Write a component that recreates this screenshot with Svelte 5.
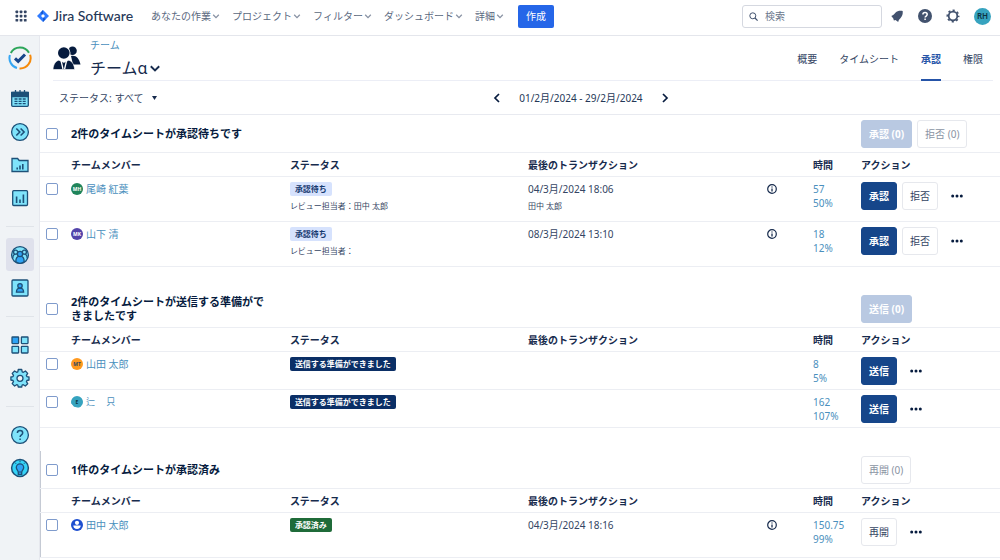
<script>
  const navItems = ["あなたの作業", "プロジェクト", "フィルター", "ダッシュボード", "詳細"];
  const tabs = ["概要", "タイムシート", "承認", "権限"];
  const activeTab = "承認";

  // Seitenleiste, in Gruppen durch Linien getrennt
  const sideGroups = [
    [
      { icon: "calendar", label: "カレンダー" },
      { icon: "forward", label: "次へ" },
      { icon: "folder", label: "フォルダー" },
      { icon: "chart", label: "レポート" }
    ],
    [
      { icon: "teams", label: "チーム", active: true },
      { icon: "account", label: "アカウント" }
    ],
    [
      { icon: "apps", label: "アプリ" },
      { icon: "gear", label: "設定" }
    ],
    [
      { icon: "help", label: "ヘルプ" },
      { icon: "bulb", label: "ヒント" }
    ]
  ];

  const sections = [
    {
      id: "waiting",
      title: "2件のタイムシートが承認待ちです",
      bulk: [
        { text: "承認 (0)", primary: true },
        { text: "拒否 (0)", primary: false }
      ],
      rows: [
        {
          name: "尾崎 紅葉", initials: "MH", color: "green",
          status: "承認待ち", kind: "waiting", reviewer: "レビュー担当者：田中 太郎",
          date: "04/3月/2024 18:06", by: "田中 太郎",
          hours: "57", percent: "50%", actions: ["承認", "拒否"]
        },
        {
          name: "山下 清", initials: "MK", color: "purple",
          status: "承認待ち", kind: "waiting", reviewer: "レビュー担当者：",
          date: "08/3月/2024 13:10",
          hours: "18", percent: "12%", actions: ["承認", "拒否"]
        }
      ],
      tall: true
    },
    {
      id: "ready",
      title: "2件のタイムシートが送信する準備ができましたです",
      bulk: [{ text: "送信 (0)", primary: true }],
      rows: [
        {
          name: "山田 太郎", initials: "MT", color: "orange",
          status: "送信する準備ができました", kind: "ready",
          hours: "8", percent: "5%", actions: ["送信"]
        },
        {
          name: "辷　 只", initials: "E", color: "teal", small: true,
          status: "送信する準備ができました", kind: "ready",
          hours: "162", percent: "107%", actions: ["送信"]
        }
      ]
    },
    {
      id: "approved",
      title: "1件のタイムシートが承認済み",
      bulk: [{ text: "再開 (0)", primary: false }],
      rows: [
        {
          name: "田中 太郎", color: "blue",
          status: "承認済み", kind: "approved",
          date: "04/3月/2024 18:16",
          hours: "150.75", percent: "99%", actions: ["再開"]
        }
      ],
      tall: true
    }
  ];
</script>

{#snippet chevron(size)}
  <svg class="chevron" width={size} height={size} viewBox="0 0 10 10" aria-hidden="true">
    <path d="M1.5 3.5 5 7l3.5-3.5" fill="none" stroke="currentColor" stroke-width="1.6" />
  </svg>
{/snippet}

{#snippet sideIcon(name)}
  <svg width="20" height="20" viewBox="0 0 20 20" fill="#7fe3fb" stroke="#1d5078" stroke-width="1.3" aria-hidden="true">
    {#if name === "calendar"}
      <rect x="1.7" y="3.5" width="16.6" height="13.8" rx="1" />
      <path d="M1.7 3.5h16.6v4H1.7z" fill="#1d5078" />
      <path d="M5.5 1v4M10 1v4M14.5 1v4" />
      <path d="M4.5 10h3M8.6 10h3M12.7 10h3M4.5 12.3h3M8.6 12.3h3M12.7 12.3h3M4.5 14.7h3M8.6 14.7h3M12.7 14.7h3" />
    {:else if name === "forward"}
      <circle cx="10" cy="10" r="8.4" />
      <path d="m6.3 6.5 3.5 3.5-3.5 3.5M10.6 6.5l3.5 3.5-3.5 3.5" fill="none" stroke-width="1.6" />
    {:else if name === "folder"}
      <path d="M2 3.5h5.6l1.6 2H18v11H2z" />
      <path d="M7.2 14.5v-2M10 14.5v-4M12.8 14.5V9" stroke-width="1.6" />
    {:else if name === "chart"}
      <rect x="2.7" y="2.7" width="14.8" height="14.8" rx="1" />
      <path d="M6.6 15V8.5M10 15v-3.5M13.4 15V6.5" stroke-width="1.6" />
    {:else if name === "teams"}
      <circle cx="10" cy="10" r="8.4" />
      <path d="M2.8 13.5c0-3 1-4.4 2.8-4.4M17.2 13.5c0-3-1-4.4-2.8-4.4" fill="none" />
      <circle cx="5.6" cy="7.2" r="2" />
      <circle cx="14.4" cy="7.2" r="2" />
      <path d="M5.8 16.8c0-4 1.6-5.6 4.2-5.6s4.2 1.6 4.2 5.6c-2.6 1.9-5.8 1.9-8.4 0z" fill="#2ea3f5" />
      <circle cx="10" cy="9" r="2.6" fill="#2ea3f5" />
    {:else if name === "account"}
      <rect x="2" y="2" width="16" height="16" rx="1" />
      <path d="M6.4 14.2c0-2.7 1.2-4.1 3.6-4.1s3.6 1.4 3.6 4.1z" fill="#2ea3f5" />
      <circle cx="10" cy="7.8" r="2.2" fill="#2ea3f5" />
    {:else if name === "apps"}
      <rect x="2" y="2" width="6.6" height="6.6" rx="0.5" fill="#2ea3f5" />
      <rect x="11.4" y="2" width="6.6" height="6.6" rx="0.5" />
      <rect x="2" y="11.4" width="6.6" height="6.6" rx="0.5" />
      <rect x="11.4" y="11.4" width="6.6" height="6.6" rx="0.5" />
    {:else if name === "gear"}
      <path stroke-linejoin="round" d="M8.3 1.5h3.4l.5 2.3 1.2.5 2-1.3 2.3 2.4-1.3 2 .5 1.2 2.1.4v3l-2.1.5-.5 1.2 1.3 2-2.4 2.3-2-1.3-1.2.5-.4 1.8H8.3l-.5-1.8-1.2-.5-2 1.3-2.4-2.4 1.3-2-.5-1.1-2.1-.5V9l2.1-.4.5-1.2-1.3-2L4.6 3l2 1.3 1.2-.5z" />
      <circle cx="10" cy="10.3" r="3" fill="#f0f3f6" />
    {:else if name === "help"}
      <circle cx="10" cy="10" r="8.4" />
      <path d="M7.4 8c0-3.4 5.3-3.4 5.3 0 0 1.9-2.6 1.9-2.6 4.1M10.1 13.6v1.5" fill="none" stroke-width="1.5" />
    {:else if name === "bulb"}
      <circle cx="10" cy="10" r="8.4" fill="#35d3f7" stroke-width="1.5" />
      <path d="M8.3 14.5c0-2-2-2.6-2-5a3.7 3.7 0 0 1 7.4 0c0 2.4-2 3-2 5v1.8H8.3z" fill="#2ea3f5" />
      <path d="M10 2.5v1.8M4.8 4.5l1.3 1.3M15.2 4.5l-1.3 1.3M8.5 14h3" stroke-width="1" />
    {/if}
  </svg>
{/snippet}

<div class="app">
  <header class="topbar">
    <button class="icon-button" aria-label="アプリ切り替え">
      <svg width="12" height="12" viewBox="0 0 12 12" fill="#344563">
        {#each [0, 1, 2] as r}
          {#each [0, 1, 2] as c}
            <rect x={0.5 + c * 4.2} y={0.5 + r * 4.2} width="2.7" height="2.7" rx="0.7" />
          {/each}
        {/each}
      </svg>
    </button>
    <a class="brand" href="#home">
      <svg width="12" height="12" viewBox="0 0 12 12" aria-hidden="true">
        <path d="M6 0l6 6-6 6-6-6z" fill="#2f7bff" />
        <path d="M6 0 3.5 2.8 6 5.2z" fill="#1559cf" />
        <path d="M6 12l2.5-2.8L6 6.8z" fill="#1559cf" />
        <path d="M6 4l2 2-2 2-2-2z" fill="#fff" />
      </svg>
      <span>Jira Software</span>
    </a>
    <nav class="main-nav">
      {#each navItems as item}
        <button class="nav-item">{item}{@render chevron(8)}</button>
      {/each}
    </nav>
    <button class="create">作成</button>
    <label class="search">
      <svg width="9" height="9" viewBox="0 0 9 9" aria-hidden="true">
        <circle cx="3.8" cy="3.8" r="3" fill="none" stroke="#42526e" />
        <path d="m6 6 2.6 2.6" stroke="#42526e" stroke-width="1.2" />
      </svg>
      <input type="search" placeholder="検索" aria-label="検索" />
    </label>
    <div class="top-icons">
      <button class="icon-button" aria-label="通知">
        <svg width="14" height="14" viewBox="0 0 14 14" fill="#42526e">
          <path d="M12.7 2c.3 3-.4 5.400-2.500 7.500L8.300 11.600 2.800 6.800 5.400 3.700C7.300 1.900 9.800 1.500 12.700 2z" />
          <path d="M1.300 6.900 4.200 5.400l4.900 4.200-.9 3.500-2.700-2.200-1.600.5-.6-2z" />
        </svg>
      </button>
      <button class="icon-button" aria-label="ヘルプ">
        <svg width="14" height="14" viewBox="0 0 14 14">
          <circle cx="7" cy="7" r="7" fill="#42526e" />
          <path d="M4.900 5.600c0-2.700 4.300-2.700 4.300 0 0 1.400-2.100 1.500-2.100 3M7.100 9.600v1.500" fill="none" stroke="#fff" stroke-width="1.500" />
        </svg>
      </button>
      <button class="icon-button" aria-label="設定">
        <svg width="14" height="14" viewBox="0 0 14 14" fill="none" stroke="#42526e">
          <circle cx="7" cy="7" r="4.300" stroke-width="1.800" />
          <circle cx="7" cy="7" r="5.700" stroke-width="1.600" stroke-dasharray="2.200 2.280" stroke-dashoffset="1.100" />
        </svg>
      </button>
      <button class="profile" aria-label="プロフィール">RH</button>
    </div>
  </header>

  <div class="body">
    <aside class="sidebar">
      <a class="side-logo" href="#start" aria-label="Timesheets">
        <svg width="24" height="24" viewBox="0 0 24 24" fill="none" stroke-width="2">
          <path d="M2.8 7A10.400 10.400 0 0 1 21 6.800" stroke="#2da65a" />
          <path d="M22.100 8.800A10.400 10.400 0 0 1 11.500 22.400" stroke="#f58a0b" />
          <path d="M9 22A10.400 10.400 0 0 1 1.900 9" stroke="#35a6f3" />
          <path d="m7 12.300 3.200 3L17 8.500" stroke="#15458a" stroke-width="3" />
        </svg>
      </a>
      {#each sideGroups as group, i}
        {#if i > 0}<hr />{/if}
        {#each group as item}
          <a class="side-item" class:active={item.active} href={`#${item.icon}`} aria-label={item.label}>
            {@render sideIcon(item.icon)}
          </a>
        {/each}
      {/each}
    </aside>

    <main>
      <div class="page-head">
        <svg class="people" width="28" height="24" viewBox="0 0 28 24" fill="#061b3e" aria-hidden="true">
          <circle cx="19.500" cy="4.800" r="4.300" />
          <path d="M18 10c5-1 8 2 9.500 8.500H20z" />
          <circle cx="10.800" cy="7" r="6.700" fill="#fff" />
          <circle cx="10.800" cy="7" r="5.800" />
          <path d="M0 23.500c.3-5 2.400-8.300 5.800-9.300l5 2.300 5-2.300c3.400 1 5.500 4.300 5.800 9.300z" stroke="#fff" stroke-width="0.600" />
          <path d="m8 14.500 2 8.500M13.600 14.500l-2 8.500" stroke="#fff" stroke-width="1.300" />
        </svg>
        <div class="titles">
          <a href="#teams">チーム</a>
          <h1><button>チームα{@render chevron(12)}</button></h1>
        </div>
        <nav class="tabs">
          {#each tabs as tab}
            <a href={`#${tab}`} class:selected={tab === activeTab}>{tab}</a>
          {/each}
        </nav>
      </div>

      <div class="filters">
        <div class="status-filter">
          <label for="status">ステータス:</label>
          <select id="status">
            <option>すべて</option>
          </select>
          <svg width="5" height="4" viewBox="0 0 5 4" aria-hidden="true"><path d="M0 0h5L2.500 4z" fill="#172b4d" /></svg>
        </div>
        <div class="period">
          <button class="icon-button" aria-label="前の期間">
            <svg width="8" height="10" viewBox="0 0 8 10"><path d="M6 1 2 5l4 4" fill="none" stroke="#061b3e" stroke-width="1.700" /></svg>
          </button>
          <span>01/2月/2024 - 29/2月/2024</span>
          <button class="icon-button" aria-label="次の期間">
            <svg width="8" height="10" viewBox="0 0 8 10"><path d="m2 1 4 4-4 4" fill="none" stroke="#061b3e" stroke-width="1.700" /></svg>
          </button>
        </div>
      </div>

      {#each sections as section}
        <section>
          <div class="section-head">
            <input type="checkbox" id={section.id} />
            <h2><label for={section.id}>{section.title}</label></h2>
            <div class="bulk">
              {#each section.bulk as action}
                <button class="action" class:primary={action.primary} disabled>{action.text}</button>
              {/each}
            </div>
          </div>
          <table>
            <colgroup>
              <col class="col-check" />
              <col class="col-member" />
              <col class="col-status" />
              <col />
              <col class="col-info" />
              <col class="col-hours" />
              <col class="col-actions" />
            </colgroup>
            <thead>
              <tr>
                <th></th>
                <th>チームメンバー</th>
                <th>ステータス</th>
                <th>最後のトランザクション</th>
                <th></th>
                <th>時間</th>
                <th>アクション</th>
              </tr>
            </thead>
            <tbody>
              {#each section.rows as row}
                <tr class:tall={section.tall}>
                  <td class="check"><input type="checkbox" aria-label={row.name} /></td>
                  <td>
                    <a class="member" href="#member">
                      <span class={`avatar ${row.color}`}>
                        {#if row.initials}
                          {row.initials}
                        {:else}
                          <svg width="12" height="12" viewBox="0 0 12 12" fill="#fff" aria-hidden="true">
                            <circle cx="6" cy="3.800" r="2.100" />
                            <path d="M2.300 6.500h7.400c0 2.200-1.500 3.400-3.700 3.400s-3.700-1.200-3.700-3.400z" />
                          </svg>
                        {/if}
                      </span>
                      <span class:small={row.small}>{row.name}</span>
                    </a>
                  </td>
                  <td>
                    <span class={`badge ${row.kind}`}>{row.status}</span>
                    {#if row.reviewer}<p class="sub">{row.reviewer}</p>{/if}
                  </td>
                  <td>
                    {#if row.date}{row.date}{/if}
                    {#if row.by}<p class="sub">{row.by}</p>{/if}
                  </td>
                  <td>
                    {#if row.date}
                      <button class="icon-button info" aria-label="詳細情報">
                        <svg width="10" height="10" viewBox="0 0 10 10" fill="none" stroke="#172b4d">
                          <circle cx="5" cy="5" r="4.300" stroke-width="1.200" />
                          <path d="M5 4.500v3M5 2.400v1.200" stroke-width="1.300" />
                        </svg>
                      </button>
                    {/if}
                  </td>
                  <td class="hours">
                    <a href="#hours">{row.hours}</a>
                    <a href="#hours">{row.percent}</a>
                  </td>
                  <td>
                    <div class="row-actions">
                      {#each row.actions as action, i}
                        <button class="action" class:primary={i === 0 && action !== "再開"}>{action}</button>
                      {/each}
                      <button class="icon-button more" aria-label="その他">
                        <svg width="12" height="4" viewBox="0 0 12 4" fill="#061b3e">
                          <circle cx="1.700" cy="2" r="1.500" />
                          <circle cx="6" cy="2" r="1.500" />
                          <circle cx="10.300" cy="2" r="1.500" />
                        </svg>
                      </button>
                    </div>
                  </td>
                </tr>
              {/each}
            </tbody>
          </table>
        </section>
      {/each}
    </main>
  </div>
</div>

<style>
  :global(body) {
    background: #fff;
  }
  .app {
    display: flex;
    flex-direction: column;
    min-height: 100vh;
    font-family: "Noto Sans", "Noto Sans CJK JP", sans-serif;
    font-size: 10px;
    line-height: 14px;
    color: #344563;
  }
  button, input, select {
    font: inherit;
    color: inherit;
  }
  button {
    padding: 0;
    border: 0;
    background: none;
    cursor: pointer;
  }
  a {
    color: #4a8fbd;
    text-decoration: none;
  }
  svg {
    display: block;
    flex: none;
  }
  .icon-button {
    display: flex;
    align-items: center;
  }

  /* Kopfleiste */
  .topbar {
    display: flex;
    align-items: center;
    box-sizing: border-box;
    height: 36px;
    padding: 0 9px 3px 15px;
    border-bottom: 1px solid #e4e6ec;
  }
  .brand {
    display: flex;
    align-items: center;
    gap: 4px;
    margin-left: 10px;
    font-family: Lato, "Noto Sans", sans-serif;
    font-size: 14px;
    font-weight: 500;
    color: #253858;
    white-space: nowrap;
  }
  .main-nav {
    display: flex;
    gap: 12px;
    margin-left: 18px;
  }
  .nav-item {
    display: flex;
    align-items: center;
    gap: 1px;
    color: #5a6880;
    white-space: nowrap;
  }
  .nav-item :global(.chevron) {
    color: #8993a4;
  }
  .create {
    height: 23px;
    margin-left: 14px;
    padding: 0 8px;
    border-radius: 2px;
    background: #2566e8;
    color: #fff;
    white-space: nowrap;
  }
  .search {
    display: flex;
    align-items: center;
    gap: 7px;
    box-sizing: border-box;
    width: 140px;
    height: 23px;
    margin-left: auto;
    padding: 0 6px;
    border: 1px solid #d5d8e0;
    border-radius: 3px;
  }
  .search input {
    width: 100%;
    min-width: 0;
    padding: 0;
    border: 0;
    outline: 0;
    background: none;
  }
  .search input::placeholder {
    color: #6b778c;
  }
  .top-icons {
    display: flex;
    align-items: center;
    gap: 14px;
    margin-left: 8px;
  }
  .profile {
    width: 17px;
    height: 17px;
    border-radius: 50%;
    background: #36a3bf;
    color: #0b3242;
    font-size: 8px;
    font-weight: 600;
  }

  /* Seitenleiste */
  .body {
    display: flex;
    flex: 1;
  }
  .sidebar {
    box-sizing: border-box;
    flex: none;
    width: 40px;
    padding-top: 10px;
    border-right: 1px solid #e6e8ee;
    background: #f0f3f6;
  }
  .side-logo {
    display: flex;
    justify-content: center;
    margin-bottom: 12px;
  }
  .side-item {
    display: flex;
    align-items: center;
    justify-content: center;
    height: 33px;
    margin: 0 5px 0 6px;
    border-radius: 3px;
  }
  .side-item.active {
    background: #dfe1ec;
  }
  .sidebar hr {
    height: 1px;
    margin: 12px 5px 11px 6px;
    border: 0;
    background: #e0e4e9;
  }

  main {
    flex: 1;
    min-width: 0;
  }
  .page-head {
    display: flex;
    align-items: center;
    box-sizing: border-box;
    height: 45px;
    margin: 0 7px 0 13px;
    border-bottom: 1px solid #eceef6;
  }
  .titles {
    display: flex;
    flex-direction: column;
    gap: 2px;
    margin-left: 9px;
    padding-top: 4px;
  }
  .titles h1 {
    margin: 0;
    font-size: 16px;
    font-weight: 400;
    line-height: 28px;
  }
  .titles h1 button {
    display: flex;
    align-items: center;
    gap: 1px;
    color: #172b4d;
    line-height: 28px;
  }
  .tabs {
    display: flex;
    align-self: stretch;
    gap: 22px;
    margin: 0 10px -1px auto;
  }
  .tabs a {
    display: flex;
    align-items: center;
    padding-top: 2px;
    border-bottom: 2px solid transparent;
    color: #344563;
    white-space: nowrap;
  }
  .tabs a.selected {
    border-color: #2554a8;
    color: #2554a8;
    font-weight: 700;
  }
  .filters {
    display: flex;
    align-items: center;
    box-sizing: border-box;
    height: 34px;
    border-bottom: 1px solid #e8eaf0;
  }
  .status-filter {
    display: flex;
    align-items: center;
    gap: 3px;
    box-sizing: border-box;
    flex: 0 0 47%;
    padding-left: 19px;
  }
  .status-filter select {
    padding: 0;
    border: 0;
    background: none;
    appearance: none;
  }
  .status-filter svg {
    margin-left: 4px;
  }
  .period {
    display: flex;
    align-items: center;
    gap: 18px;
    padding-left: 2px;
    color: #253858;
    white-space: nowrap;
  }

  /* Abschnitte */
  section + section {
    padding-top: 23px;
  }
  section:last-child {
    background: linear-gradient(#c5cad4, #c5cad4) left / 1px 100% no-repeat content-box content-box;
  }
  .section-head {
    display: flex;
    align-items: center;
    box-sizing: border-box;
    height: 38px;
    padding-left: 6px;
    border-bottom: 1px solid #eceef3;
  }
  .section-head h2 {
    width: 200px;
    margin: 0 auto 0 13px;
    font-size: 11px;
    line-height: 14px;
    color: #061b3e;
  }
  .bulk {
    display: flex;
    gap: 5px;
    width: 139px;
  }
  input[type="checkbox"] {
    display: block;
    flex: none;
    width: 12px;
    height: 12px;
    margin: 0;
    border: 1px solid #7f9bcc;
    border-radius: 2px;
    background: #fff;
    appearance: none;
  }
  input[type="checkbox"]:checked {
    background: #16468a;
  }
  .action {
    height: 28px;
    padding: 0 7px;
    border: 1px solid #e6e8ed;
    border-radius: 3px;
    background: #fff;
    white-space: nowrap;
  }
  .action.primary {
    border-color: #16468a;
    background: #16468a;
    color: #fff;
    font-weight: 700;
  }
  .action:disabled {
    color: #8a94a3;
    cursor: default;
  }
  .action.primary:disabled {
    border-color: #b9c9e2;
    background: #b9c9e2;
    color: #fff;
  }

  table {
    width: 100%;
    table-layout: fixed;
    border-spacing: 0;
  }
  .col-check {
    width: 31px;
  }
  .col-member {
    width: 22.8%;
  }
  .col-status {
    width: 24.8%;
  }
  .col-info {
    width: 46px;
  }
  .col-hours {
    width: 48px;
  }
  .col-actions {
    width: 139px;
  }
  th {
    box-sizing: border-box;
    height: 24px;
    padding: 0;
    border-bottom: 1px solid #eceef3;
    color: #172b4d;
    text-align: left;
    white-space: nowrap;
  }
  td {
    box-sizing: border-box;
    height: 38px;
    padding: 5px 0 0;
    border-bottom: 1px solid #eceef3;
    vertical-align: top;
  }
  .tall td {
    height: 45px;
  }
  td.check {
    padding: 6px 0 0 6px;
  }
  .member {
    display: flex;
    align-items: center;
    gap: 3px;
  }
  .avatar {
    display: flex;
    align-items: center;
    justify-content: center;
    width: 12px;
    height: 12px;
    border-radius: 50%;
    color: #fff;
    font-size: 5px;
    font-weight: 700;
    line-height: 12px;
  }
  .green { background: #1f845a; }
  .purple { background: #5243aa; }
  .orange { background: #ff991f; color: #344563; }
  .teal {
    background: #36a3bf;
    color: #0b3242;
    clip-path: polygon(25% 0, 80% 0, 100% 30%, 100% 70%, 70% 100%, 25% 90%, 0 60%, 0 30%);
  }
  .blue { background: #1d4fd0; }
  .small {
    font-size: 9px;
    white-space: pre;
  }
  .badge {
    display: block;
    width: fit-content;
    padding: 0 5px;
    border-radius: 2px;
    font-size: 8px;
    font-weight: 700;
    white-space: nowrap;
  }
  .waiting { background: #d6e2fd; color: #14386f; }
  .ready { background: #0b2f66; color: #fff; }
  .approved { background: #1f6b39; color: #fff; }
  .sub {
    margin: 3px 0 0;
    font-size: 8px;
  }
  .info {
    height: 14px;
  }
  .hours a {
    display: block;
  }
  .row-actions {
    display: flex;
    gap: 5px;
  }
  .more {
    padding: 0 8px;
  }
</style>
